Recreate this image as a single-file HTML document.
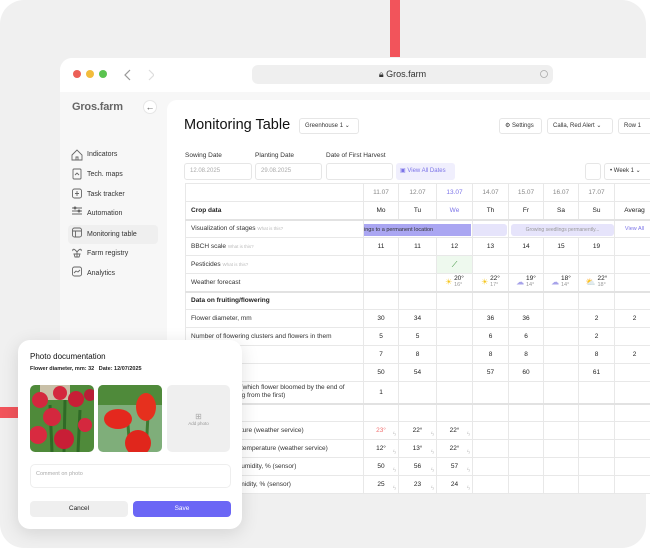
<!DOCTYPE html>
<html><head><meta charset="utf-8">
<style>
*{box-sizing:border-box;margin:0;padding:0}
body{width:650px;height:550px;overflow:hidden;background:#fff;font-family:"Liberation Sans",sans-serif;color:#222;position:relative}
.abs{position:absolute}
.outer{left:0;top:0;width:646px;height:548px;background:#f0f0f0;border-radius:24px}
.win{left:60px;top:58px;width:600px;height:434px;background:#f7f7f7;border-radius:12px 0 0 0;overflow:hidden}
.tbar{left:0;top:0;width:600px;height:34px;background:#fff}
.dot{width:8px;height:8px;border-radius:50%;top:12px}
.url{left:192px;top:7px;width:301px;height:19px;background:#efefef;border-radius:6px;font-size:9px;text-align:center;line-height:19px;color:#333}
.side div.it{position:absolute;left:0;font-size:7px;color:#333;height:19px;line-height:19px;width:90px;padding-left:19px}
.main{left:107px;top:42px;width:500px;height:400px;background:#fff;border-radius:10px 0 0 0}
.box{position:absolute;border:1px solid #e6e6e6;border-radius:3px;background:#fff;font-size:6px;line-height:14px;padding-left:5px;color:#333}
.lbl{position:absolute;font-size:6.5px;color:#333}
table{position:absolute;left:185px;top:183px;width:469px;border-collapse:collapse;font-size:6.5px;table-layout:fixed;background:#fff}
td{border:1px solid #e8e8e8;height:18px;text-align:center;padding:0;white-space:nowrap;overflow:hidden;position:relative}
td.l{text-align:left;padding-left:5px;color:#333}
td.h{color:#888}
td.p{color:#7c74e8}
td.b{font-weight:bold;color:#222}
.q{color:#bbb;font-size:4.5px}
tr.tk td{border-bottom:2px solid #e2e2e2}
.z{position:absolute;right:2px;bottom:1px;color:#ccc;font-size:6px}
.w{display:inline-block;vertical-align:middle;line-height:6px;font-size:6.5px;text-align:left}
.w small{font-size:5.5px;color:#999;display:block}
.pop{left:18px;top:340px;width:224px;height:189px;background:#fff;border-radius:12px;box-shadow:0 4px 18px rgba(0,0,0,.12)}
</style></head><body>
<div class="abs outer"></div>
<div class="abs" style="left:390px;top:0;width:10px;height:57px;background:#f2545b"></div>
<div class="abs" style="left:0;top:407px;width:18px;height:11px;background:#f2545b"></div>

<div class="abs win">
 <div class="abs tbar">
  <div class="abs dot" style="left:13px;background:#ec5f57"></div>
  <div class="abs dot" style="left:26px;background:#f2bc3c"></div>
  <div class="abs dot" style="left:39px;background:#5ac34f"></div>
  <svg class="abs" style="left:64px;top:10px" width="30" height="14"><path d="M6 2 L1 7 L6 12" fill="none" stroke="#999" stroke-width="1.2"/><path d="M25 2 L30 7 L25 12" fill="none" stroke="#ddd" stroke-width="1.2"/></svg>
  <div class="abs url">🔒︎ Gros.farm</div>
  <svg class="abs" style="left:479px;top:11px" width="10" height="10"><circle cx="5" cy="5" r="3.5" fill="none" stroke="#aaa" stroke-width="0.8"/></svg>
 </div>
 <div class="abs" style="left:12px;top:43px;font-size:11px;color:#666;font-weight:bold;letter-spacing:-.2px">Gros.farm</div>
 <div class="abs" style="left:83px;top:42px;width:14px;height:14px;border-radius:50%;background:#fff;border:1px solid #e6e6e6;font-size:9px;text-align:center;line-height:12px;color:#555">←</div>
 <div class="side">
  <div class="abs" style="left:8px;top:167px;width:90px;height:19px;background:#efefef;border-radius:4px"></div>
  <div class="it" style="top:87px;left:8px">Indicators</div>
  <div class="it" style="top:107px;left:8px">Tech. maps</div>
  <div class="it" style="top:127px;left:8px">Task tracker</div>
  <div class="it" style="top:146px;left:8px">Automation</div>
  <div class="it" style="top:167px;left:8px">Monitoring table</div>
  <div class="it" style="top:186px;left:8px">Farm registry</div>
  <div class="it" style="top:206px;left:8px">Analytics</div>
  <svg class="abs" style="left:11px;top:90px" width="12" height="130" fill="none" stroke="#666" stroke-width="0.9">
   <path d="M1 7 L6 2 L11 7 V12 H1 Z M5 12 V9 H7 V12"/>
   <rect x="2" y="21" width="8" height="10" rx="1"/><path d="M4 27 L6 25 L8 27"/>
   <rect x="1.5" y="41" width="9" height="9" rx="2"/><path d="M6 43 V48 M4 45.5 H8"/>
   <path d="M1 60 H11 M1 63 H11 M1 66 H11"/><circle cx="4" cy="60" r="1"/><circle cx="8" cy="63" r="1"/>
   <rect x="1.5" y="80" width="9" height="9" rx="2"/><path d="M1.5 83 H10.5 M4.5 83 V89"/>
   <path d="M6 104 V109 M6 104 C3 100 1 101 2 103 M6 104 C9 100 11 101 10 103 M3 106 H9 L8 109 H4 Z"/>
   <rect x="1.5" y="119" width="9" height="9" rx="2"/><path d="M3 125 L5 123 L7 124 L9 122"/>
  </svg>
 </div>
 <div class="abs main"></div>
</div>

<div class="abs" style="left:184px;top:117px;font-size:14.5px;color:#111">Monitoring Table</div>
<div class="box" style="left:299px;top:118px;width:60px;height:16px">Greenhouse 1 ⌄</div>
<div class="box" style="left:499px;top:118px;width:43px;height:16px">⚙ Settings</div>
<div class="box" style="left:547px;top:118px;width:66px;height:16px">Calla, Red Alert ⌄</div>
<div class="box" style="left:618px;top:118px;width:40px;height:16px">Row 1</div>
<div class="lbl" style="left:185px;top:152px">Sowing Date</div>
<div class="lbl" style="left:255px;top:152px">Planting Date</div>
<div class="lbl" style="left:326px;top:152px">Date of First Harvest</div>
<div class="box" style="left:184px;top:163px;width:68px;height:17px;color:#aaa">12.08.2025</div>
<div class="box" style="left:255px;top:163px;width:67px;height:17px;color:#aaa">29.08.2025</div>
<div class="box" style="left:326px;top:163px;width:67px;height:17px"></div>
<div class="abs" style="left:396px;top:163px;width:59px;height:17px;background:#f0effd;border-radius:3px;font-size:6px;line-height:17px;color:#7c74e8;padding-left:4px">▣ View All Dates</div>
<div class="box" style="left:585px;top:163px;width:16px;height:17px"></div>
<div class="box" style="left:604px;top:163px;width:50px;height:17px;line-height:15px">• Week 1 ⌄</div>

<table>
<colgroup><col style="width:178px"><col style="width:35px"><col style="width:38px"><col style="width:36px"><col style="width:36px"><col style="width:35px"><col style="width:35px"><col style="width:36px"><col style="width:40px"></colgroup>
<tr><td></td><td class="h">11.07</td><td class="h">12.07</td><td class="p">13.07</td><td class="h">14.07</td><td class="h">15.07</td><td class="h">16.07</td><td class="h">17.07</td><td></td></tr>
<tr class="tk"><td class="l b">Crop data</td><td>Mo</td><td>Tu</td><td class="p">We</td><td>Th</td><td>Fr</td><td>Sa</td><td>Su</td><td>Averag</td></tr>
<tr><td class="l">Visualization of stages <span class="q">What is this?</span></td><td colspan="3" style="text-align:left"><div style="position:absolute;left:0;top:3px;width:107px;height:12px;background:#aaa6f2;font-size:5.5px;line-height:12px;color:#333">ings to a permanent location</div></td><td><div style="position:absolute;left:0;top:3px;width:34px;height:12px;background:#e6e4fb;border-radius:0 3px 3px 0"></div></td><td colspan="3"><div style="position:absolute;left:2px;top:3px;width:103px;height:12px;background:#e6e4fb;border-radius:3px;font-size:5px;line-height:12px;color:#999">Growing seedlings permanently...</div></td><td style="color:#7c74e8;font-size:5.5px">View All</td></tr>
<tr><td class="l">BBCH scale <span class="q">What is this?</span></td><td>11</td><td>11</td><td>12</td><td>13</td><td>14</td><td>15</td><td>19</td><td></td></tr>
<tr><td class="l">Pesticides <span class="q">What is this?</span></td><td></td><td></td><td style="background:#eef9ee;color:#2e8b2e;font-size:8px">⟋</td><td></td><td></td><td></td><td></td><td></td></tr>
<tr class="tk"><td class="l">Weather forecast</td><td></td><td></td>
<td><span style="color:#f5c518;font-size:8px;vertical-align:middle">☀</span> <span class="w">20°<small>16°</small></span></td>
<td><span style="color:#f5c518;font-size:8px;vertical-align:middle">☀</span> <span class="w">22°<small>17°</small></span></td>
<td><span style="color:#a7a3ea;font-size:8px;vertical-align:middle">☁</span> <span class="w">19°<small>14°</small></span></td>
<td><span style="color:#a7a3ea;font-size:8px;vertical-align:middle">☁</span> <span class="w">18°<small>14°</small></span></td>
<td><span style="color:#ccc;font-size:8px;vertical-align:middle">⛅</span> <span class="w">22°<small>18°</small></span></td><td></td></tr>
<tr><td class="l b">Data on fruiting/flowering</td><td></td><td></td><td></td><td></td><td></td><td></td><td></td><td></td></tr>
<tr><td class="l">Flower diameter, mm</td><td>30</td><td>34</td><td></td><td>36</td><td>36</td><td></td><td>2</td><td>2</td></tr>
<tr><td class="l">Number of flowering clusters and flowers in them</td><td>5</td><td>5</td><td></td><td>6</td><td>6</td><td></td><td>2</td><td></td></tr>
<tr><td class="l">Flower stalks</td><td>7</td><td>8</td><td></td><td>8</td><td>8</td><td></td><td>8</td><td>2</td></tr>
<tr><td class="l">Plant height, cm</td><td>50</td><td>54</td><td></td><td>57</td><td>60</td><td></td><td>61</td><td></td></tr>
<tr class="tk"><td class="l" style="height:22px;line-height:8px;padding-left:5px">Flowering stage: (which flower bloomed by the end of<br>the week, counting from the first)</td><td>1</td><td></td><td></td><td></td><td></td><td></td><td></td><td></td></tr>
<tr><td class="l b">Climate</td><td></td><td></td><td></td><td></td><td></td><td></td><td></td><td></td></tr>
<tr><td class="l">Night air temperature (weather service)</td><td style="color:#f07070">23°<span class="z">ϟ</span></td><td>22°<span class="z">ϟ</span></td><td>22°<span class="z">ϟ</span></td><td></td><td></td><td></td><td></td><td></td></tr>
<tr><td class="l">Average daily air temperature (weather service)</td><td>12°<span class="z">ϟ</span></td><td>13°<span class="z">ϟ</span></td><td>22°<span class="z">ϟ</span></td><td></td><td></td><td></td><td></td><td></td></tr>
<tr><td class="l">Greenhouse air humidity, % (sensor)</td><td>50<span class="z">ϟ</span></td><td>56<span class="z">ϟ</span></td><td>57<span class="z">ϟ</span></td><td></td><td></td><td></td><td></td><td></td></tr>
<tr><td class="l">Substrate soil humidity, % (sensor)</td><td>25<span class="z">ϟ</span></td><td>23<span class="z">ϟ</span></td><td>24<span class="z">ϟ</span></td><td></td><td></td><td></td><td></td><td></td></tr>
</table>

<div class="abs pop">
 <div class="abs" style="left:12px;top:12px;font-size:8px;color:#111">Photo documentation</div>
 <div class="abs" style="left:12px;top:26px;font-size:5.5px;color:#222;font-weight:bold">Flower diameter, mm: 32 &nbsp; Date: 12/07/2025</div>
 <svg class="abs" style="left:12px;top:45px" width="64" height="67"><defs><clipPath id="c1"><rect width="64" height="67" rx="5"/></clipPath></defs><g clip-path="url(#c1)"><rect width="64" height="67" fill="#4f8a3a"/><rect x="10" y="0" width="30" height="15" fill="#c9c0a8"/><path d="M20 20 L22 67 M35 15 L34 67 M50 25 L48 67" stroke="#2f6a26" stroke-width="3"/><circle cx="10" cy="15" r="8" fill="#d4283e"/><circle cx="30" cy="8" r="7" fill="#d4283e"/><circle cx="46" cy="14" r="8" fill="#c81e36"/><circle cx="22" cy="32" r="9" fill="#d4283e"/><circle cx="55" cy="40" r="7" fill="#d4283e"/><circle cx="8" cy="50" r="9" fill="#d82a40"/><circle cx="34" cy="54" r="10" fill="#c81e36"/><circle cx="60" cy="10" r="6" fill="#b81e36"/></g></svg>
 <svg class="abs" style="left:80px;top:45px" width="64" height="67"><defs><clipPath id="c2"><rect width="64" height="67" rx="5"/></clipPath></defs><g clip-path="url(#c2)"><rect width="64" height="67" fill="#7fae7a"/><rect x="0" y="0" width="64" height="20" fill="#4f8a3a"/><path d="M30 40 L32 67 M50 30 L48 67" stroke="#3f7a30" stroke-width="3"/><ellipse cx="20" cy="34" rx="14" ry="10" fill="#e4281e"/><ellipse cx="48" cy="22" rx="10" ry="14" fill="#e6301e"/><circle cx="40" cy="58" r="13" fill="#e0261c"/></g></svg>
 <div class="abs" style="left:149px;top:45px;width:63px;height:67px;background:#efefef;border-radius:5px;text-align:center;font-size:4.5px;color:#999;padding-top:27px"><span style="font-size:8px;color:#aaa">⊞</span><br>Add photo</div>
 <div class="abs" style="left:12px;top:124px;width:201px;height:24px;border:1px solid #eee;border-radius:5px;font-size:5.5px;color:#aaa;padding:6px 5px">Comment on photo</div>
 <div class="abs" style="left:12px;top:161px;width:98px;height:16px;background:#efefef;border-radius:4px;font-size:6.5px;text-align:center;line-height:16px;color:#222">Cancel</div>
 <div class="abs" style="left:115px;top:161px;width:98px;height:16px;background:#6b66f5;border-radius:4px;font-size:6.5px;text-align:center;line-height:16px;color:#fff">Save</div>
</div>
</body></html>
